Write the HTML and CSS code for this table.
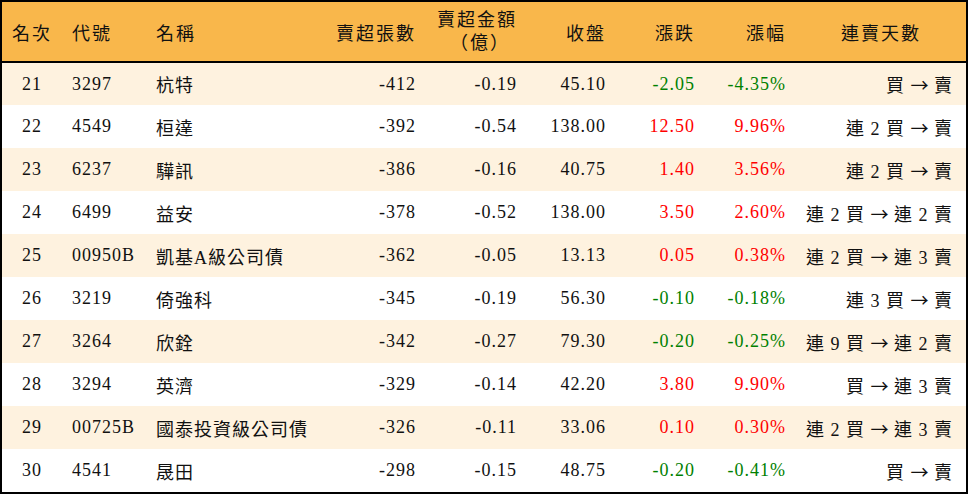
FILE: index.html
```html
<!DOCTYPE html>
<html lang="zh-Hant">
<head>
<meta charset="utf-8">
<title>賣超排行</title>
<link rel="stylesheet" href="styles.css">
</head>
<body>
<div class="frame">
<table class="rank">
<colgroup>
<col class="c1"><col class="c2"><col class="c3"><col class="c4"><col class="c5"><col class="c6"><col class="c7"><col class="c8"><col class="c9">
</colgroup>
<thead>
<tr>
<th class="ctr">名次</th>
<th class="lft">代號</th>
<th class="lft">名稱</th>
<th class="rgt">賣超張數</th>
<th class="rgt"><span class="two">賣超金額<br><span class="paren">（億）</span></span></th>
<th class="rgt">收盤</th>
<th class="rgt">漲跌</th>
<th class="rgt">漲幅</th>
<th class="ctr">連賣天數</th>
</tr>
</thead>
<tbody>
<tr class="alt"><td class="ctr">21</td><td class="lft">3297</td><td class="lft">杭特</td><td class="rgt">-412</td><td class="rgt">-0.19</td><td class="rgt">45.10</td><td class="rgt dn">-2.05</td><td class="rgt dn">-4.35%</td><td class="rgt">買 <span class="arr">→</span> 賣</td></tr>
<tr><td class="ctr">22</td><td class="lft">4549</td><td class="lft">桓達</td><td class="rgt">-392</td><td class="rgt">-0.54</td><td class="rgt">138.00</td><td class="rgt up">12.50</td><td class="rgt up">9.96%</td><td class="rgt">連 2 買 <span class="arr">→</span> 賣</td></tr>
<tr class="alt"><td class="ctr">23</td><td class="lft">6237</td><td class="lft">驊訊</td><td class="rgt">-386</td><td class="rgt">-0.16</td><td class="rgt">40.75</td><td class="rgt up">1.40</td><td class="rgt up">3.56%</td><td class="rgt">連 2 買 <span class="arr">→</span> 賣</td></tr>
<tr><td class="ctr">24</td><td class="lft">6499</td><td class="lft">益安</td><td class="rgt">-378</td><td class="rgt">-0.52</td><td class="rgt">138.00</td><td class="rgt up">3.50</td><td class="rgt up">2.60%</td><td class="rgt">連 2 買 <span class="arr">→</span> 連 2 賣</td></tr>
<tr class="alt"><td class="ctr">25</td><td class="lft">00950B</td><td class="lft">凱基A級公司債</td><td class="rgt">-362</td><td class="rgt">-0.05</td><td class="rgt">13.13</td><td class="rgt up">0.05</td><td class="rgt up">0.38%</td><td class="rgt">連 2 買 <span class="arr">→</span> 連 3 賣</td></tr>
<tr><td class="ctr">26</td><td class="lft">3219</td><td class="lft">倚強科</td><td class="rgt">-345</td><td class="rgt">-0.19</td><td class="rgt">56.30</td><td class="rgt dn">-0.10</td><td class="rgt dn">-0.18%</td><td class="rgt">連 3 買 <span class="arr">→</span> 賣</td></tr>
<tr class="alt"><td class="ctr">27</td><td class="lft">3264</td><td class="lft">欣銓</td><td class="rgt">-342</td><td class="rgt">-0.27</td><td class="rgt">79.30</td><td class="rgt dn">-0.20</td><td class="rgt dn">-0.25%</td><td class="rgt">連 9 買 <span class="arr">→</span> 連 2 賣</td></tr>
<tr><td class="ctr">28</td><td class="lft">3294</td><td class="lft">英濟</td><td class="rgt">-329</td><td class="rgt">-0.14</td><td class="rgt">42.20</td><td class="rgt up">3.80</td><td class="rgt up">9.90%</td><td class="rgt">買 <span class="arr">→</span> 連 3 賣</td></tr>
<tr class="alt"><td class="ctr">29</td><td class="lft">00725B</td><td class="lft">國泰投資級公司債</td><td class="rgt">-326</td><td class="rgt">-0.11</td><td class="rgt">33.06</td><td class="rgt up">0.10</td><td class="rgt up">0.30%</td><td class="rgt">連 2 買 <span class="arr">→</span> 連 3 賣</td></tr>
<tr><td class="ctr">30</td><td class="lft">4541</td><td class="lft">晟田</td><td class="rgt">-298</td><td class="rgt">-0.15</td><td class="rgt">48.75</td><td class="rgt dn">-0.20</td><td class="rgt dn">-0.41%</td><td class="rgt">買 <span class="arr">→</span> 賣</td></tr>
</tbody>
</table>
</div>
</body>
</html>
```
FILE: styles.css
```css
html, body {
  margin: 0;
  padding: 0;
  background: #ffffff;
}
body {
  font-family: "Liberation Serif", "Noto Sans CJK TC", serif;
  font-size: 18px;
  color: #111111;
  text-spacing-trim: space-all;
}
.frame {
  width: 964px;
  border: 2px solid #000000;
}
.rank {
  width: 964px;
  border-collapse: collapse;
  table-layout: fixed;
}
.c1 { width: 60px; }
.c2 { width: 84px; }
.c3 { width: 180px; }
.c4 { width: 100px; }
.c5 { width: 101px; }
.c6 { width: 89px; }
.c7 { width: 89px; }
.c8 { width: 91px; }
.c9 { width: 170px; }
.rank th {
  background: #f9b74b;
  height: 60px;
  padding: 0 10px;
  font-weight: normal;
  letter-spacing: 2px;
  border-bottom: 2px solid #000000;
  box-sizing: border-box;
  white-space: nowrap;
}
.rank td {
  height: 43px;
  padding: 0 10px;
  letter-spacing: 1px;
  white-space: nowrap;
  box-sizing: border-box;
}
.rank td:last-child {
  padding-right: 13px;
}
.rank .alt td {
  background: #fef2df;
}
.ctr { text-align: center; }
.lft { text-align: left; }
.rgt { text-align: right; }
.two {
  display: inline-block;
  text-align: center;
  line-height: 21px;
}
.paren {
  font-family: "Noto Sans CJK TC", sans-serif;
  font-feature-settings: "chws" 0, "halt" 0, "fwid" 1;
  padding-left: 6px;
}
.arr {
  font-family: "Noto Sans CJK TC", sans-serif;
  letter-spacing: 0;
}
.up { color: #ff0000; }
.dn { color: #008000; }
```
